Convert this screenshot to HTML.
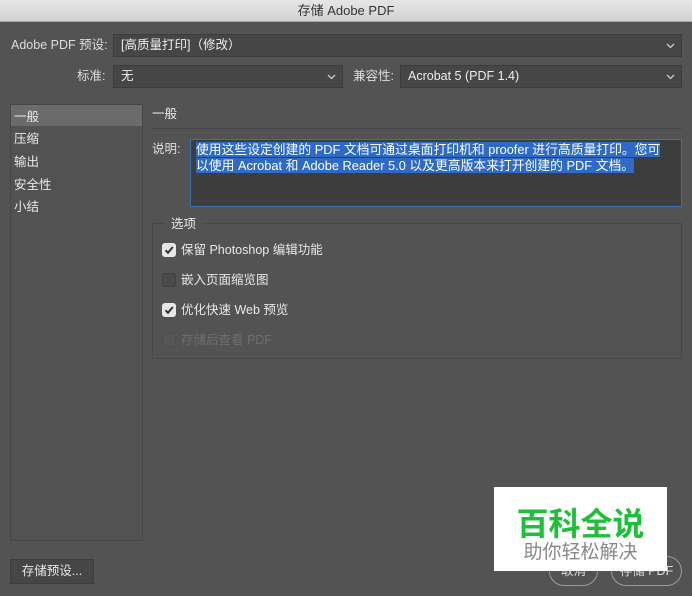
<!DOCTYPE html>
<html><head><meta charset="utf-8"><style>
*{box-sizing:border-box;margin:0;padding:0}
body{width:692px;height:596px;overflow:hidden;background:#535353;font-family:"Liberation Sans","Noto Sans CJK SC",sans-serif;font-size:12.5px;color:#e8e8e8;position:relative}
.a{position:absolute}
.title{left:0;top:0;width:692px;height:22px;background:linear-gradient(#e6e6e6,#d2d2d2);border-bottom:1px solid #a8a8a8;color:#333;text-align:center;line-height:22px;font-size:13px}
.sel{background:#464646;border:1px solid #3c3c3c;height:23px;line-height:21px;padding-left:7px;color:#eee}
.sel svg{position:absolute;right:6px;top:8px}
.lbl{line-height:23px;color:#ddd}
.cb{width:14px;height:14px;border-radius:3px;background:#4a4a4a;border:1px solid #3e3e3e}
.cb.on{background:#e8e8e8;border-color:#e8e8e8}
.btn{border:1px solid #9a9a9a;border-radius:15px;color:#ddd;text-align:center}
</style></head><body>
<div class="a title">存储 Adobe PDF</div>
<div class="a lbl" style="left:11px;top:34px">Adobe PDF 预设:</div>
<div class="a sel" style="left:113px;top:34px;width:569px">[高质量打印]（修改）<svg width="9" height="6"><path d="M1 1l3.5 3.5L8 1" stroke="#ccc" fill="none" stroke-width="1.3"/></svg></div>
<div class="a lbl" style="left:77px;top:65px">标准:</div>
<div class="a sel" style="left:113px;top:65px;width:230px">无<svg width="9" height="6"><path d="M1 1l3.5 3.5L8 1" stroke="#ccc" fill="none" stroke-width="1.3"/></svg></div>
<div class="a lbl" style="left:353px;top:65px">兼容性:</div>
<div class="a sel" style="left:400px;top:65px;width:282px">Acrobat 5 (PDF 1.4)<svg width="9" height="6"><path d="M1 1l3.5 3.5L8 1" stroke="#ccc" fill="none" stroke-width="1.3"/></svg></div>

<div class="a" style="left:10px;top:104px;width:133px;height:437px;border:1px solid #474747;background:#525252"></div>
<div class="a" style="left:11px;top:105px;width:131px;height:21px;background:#6b6b6b"></div>
<div class="a" style="left:14px;top:107px;line-height:20px">一般</div>
<div class="a" style="left:14px;top:129px;line-height:20px">压缩</div>
<div class="a" style="left:14px;top:152px;line-height:20px">输出</div>
<div class="a" style="left:14px;top:175px;line-height:20px">安全性</div>
<div class="a" style="left:14px;top:197px;line-height:20px">小结</div>

<div class="a" style="left:152px;top:104px;line-height:20px">一般</div>
<div class="a" style="left:152px;top:128px;width:530px;height:1px;background:#464646"></div>
<div class="a" style="left:152px;top:139px;line-height:20px;color:#ddd">说明:</div>
<div class="a" style="left:190px;top:139px;width:492px;height:68px;background:#3d3d3d;border:1px solid #3b6fb6;padding:2px 18px 2px 5px;line-height:16px;color:#fff;font-size:12.8px">
<span style="background:#2f6bc4">使用这些设定创建的 PDF 文档可通过桌面打印机和 proofer 进行高质量打印。您可以使用 Acrobat 和 Adobe Reader 5.0 以及更高版本来打开创建的 PDF 文档。</span></div>

<div class="a" style="left:152px;top:223px;width:530px;height:136px;border:1px solid #474747"></div>
<div class="a" style="left:165px;top:215px;background:#535353;padding:0 6px;line-height:18px">选项</div>
<div class="a cb on" style="left:162px;top:243px"><svg width="12" height="12" style="position:absolute;left:0;top:0"><path d="M2.5 6.2l2.5 2.6L9.8 3" stroke="#333" fill="none" stroke-width="2"/></svg></div>
<div class="a" style="left:181px;top:241px;line-height:18px">保留 Photoshop 编辑功能</div>
<div class="a cb" style="left:162px;top:273px"></div>
<div class="a" style="left:181px;top:271px;line-height:18px">嵌入页面缩览图</div>
<div class="a cb on" style="left:162px;top:303px"><svg width="12" height="12" style="position:absolute;left:0;top:0"><path d="M2.5 6.2l2.5 2.6L9.8 3" stroke="#333" fill="none" stroke-width="2"/></svg></div>
<div class="a" style="left:181px;top:301px;line-height:18px">优化快速 Web 预览</div>
<div class="a cb" style="left:162px;top:333px;background:#565656;border-color:#4e4e4e"></div>
<div class="a" style="left:181px;top:331px;line-height:18px;color:#6e6e6e">存储后查看 PDF</div>

<div class="a" style="left:10px;top:559px;width:84px;height:25px;background:#464646;border:1px solid #3e3e3e;line-height:23px;text-align:center">存储预设...</div>
<div class="a btn" style="left:549px;top:556px;width:49px;height:30px;line-height:28px">取消</div>
<div class="a btn" style="left:611px;top:556px;width:71px;height:30px;line-height:28px">存储 PDF</div>

<div class="a" style="left:494px;top:487px;width:173px;height:84px;background:#fff;text-align:center">
<div style="color:#1fbf3a;font-size:32px;font-weight:bold;line-height:36px;margin-top:17px;font-family:'Noto Sans CJK SC',sans-serif">百科全说</div>
<div style="color:#888;font-size:19px;line-height:22px;font-family:'Noto Sans CJK SC',sans-serif">助你轻松解决</div>
</div>
</body></html>
